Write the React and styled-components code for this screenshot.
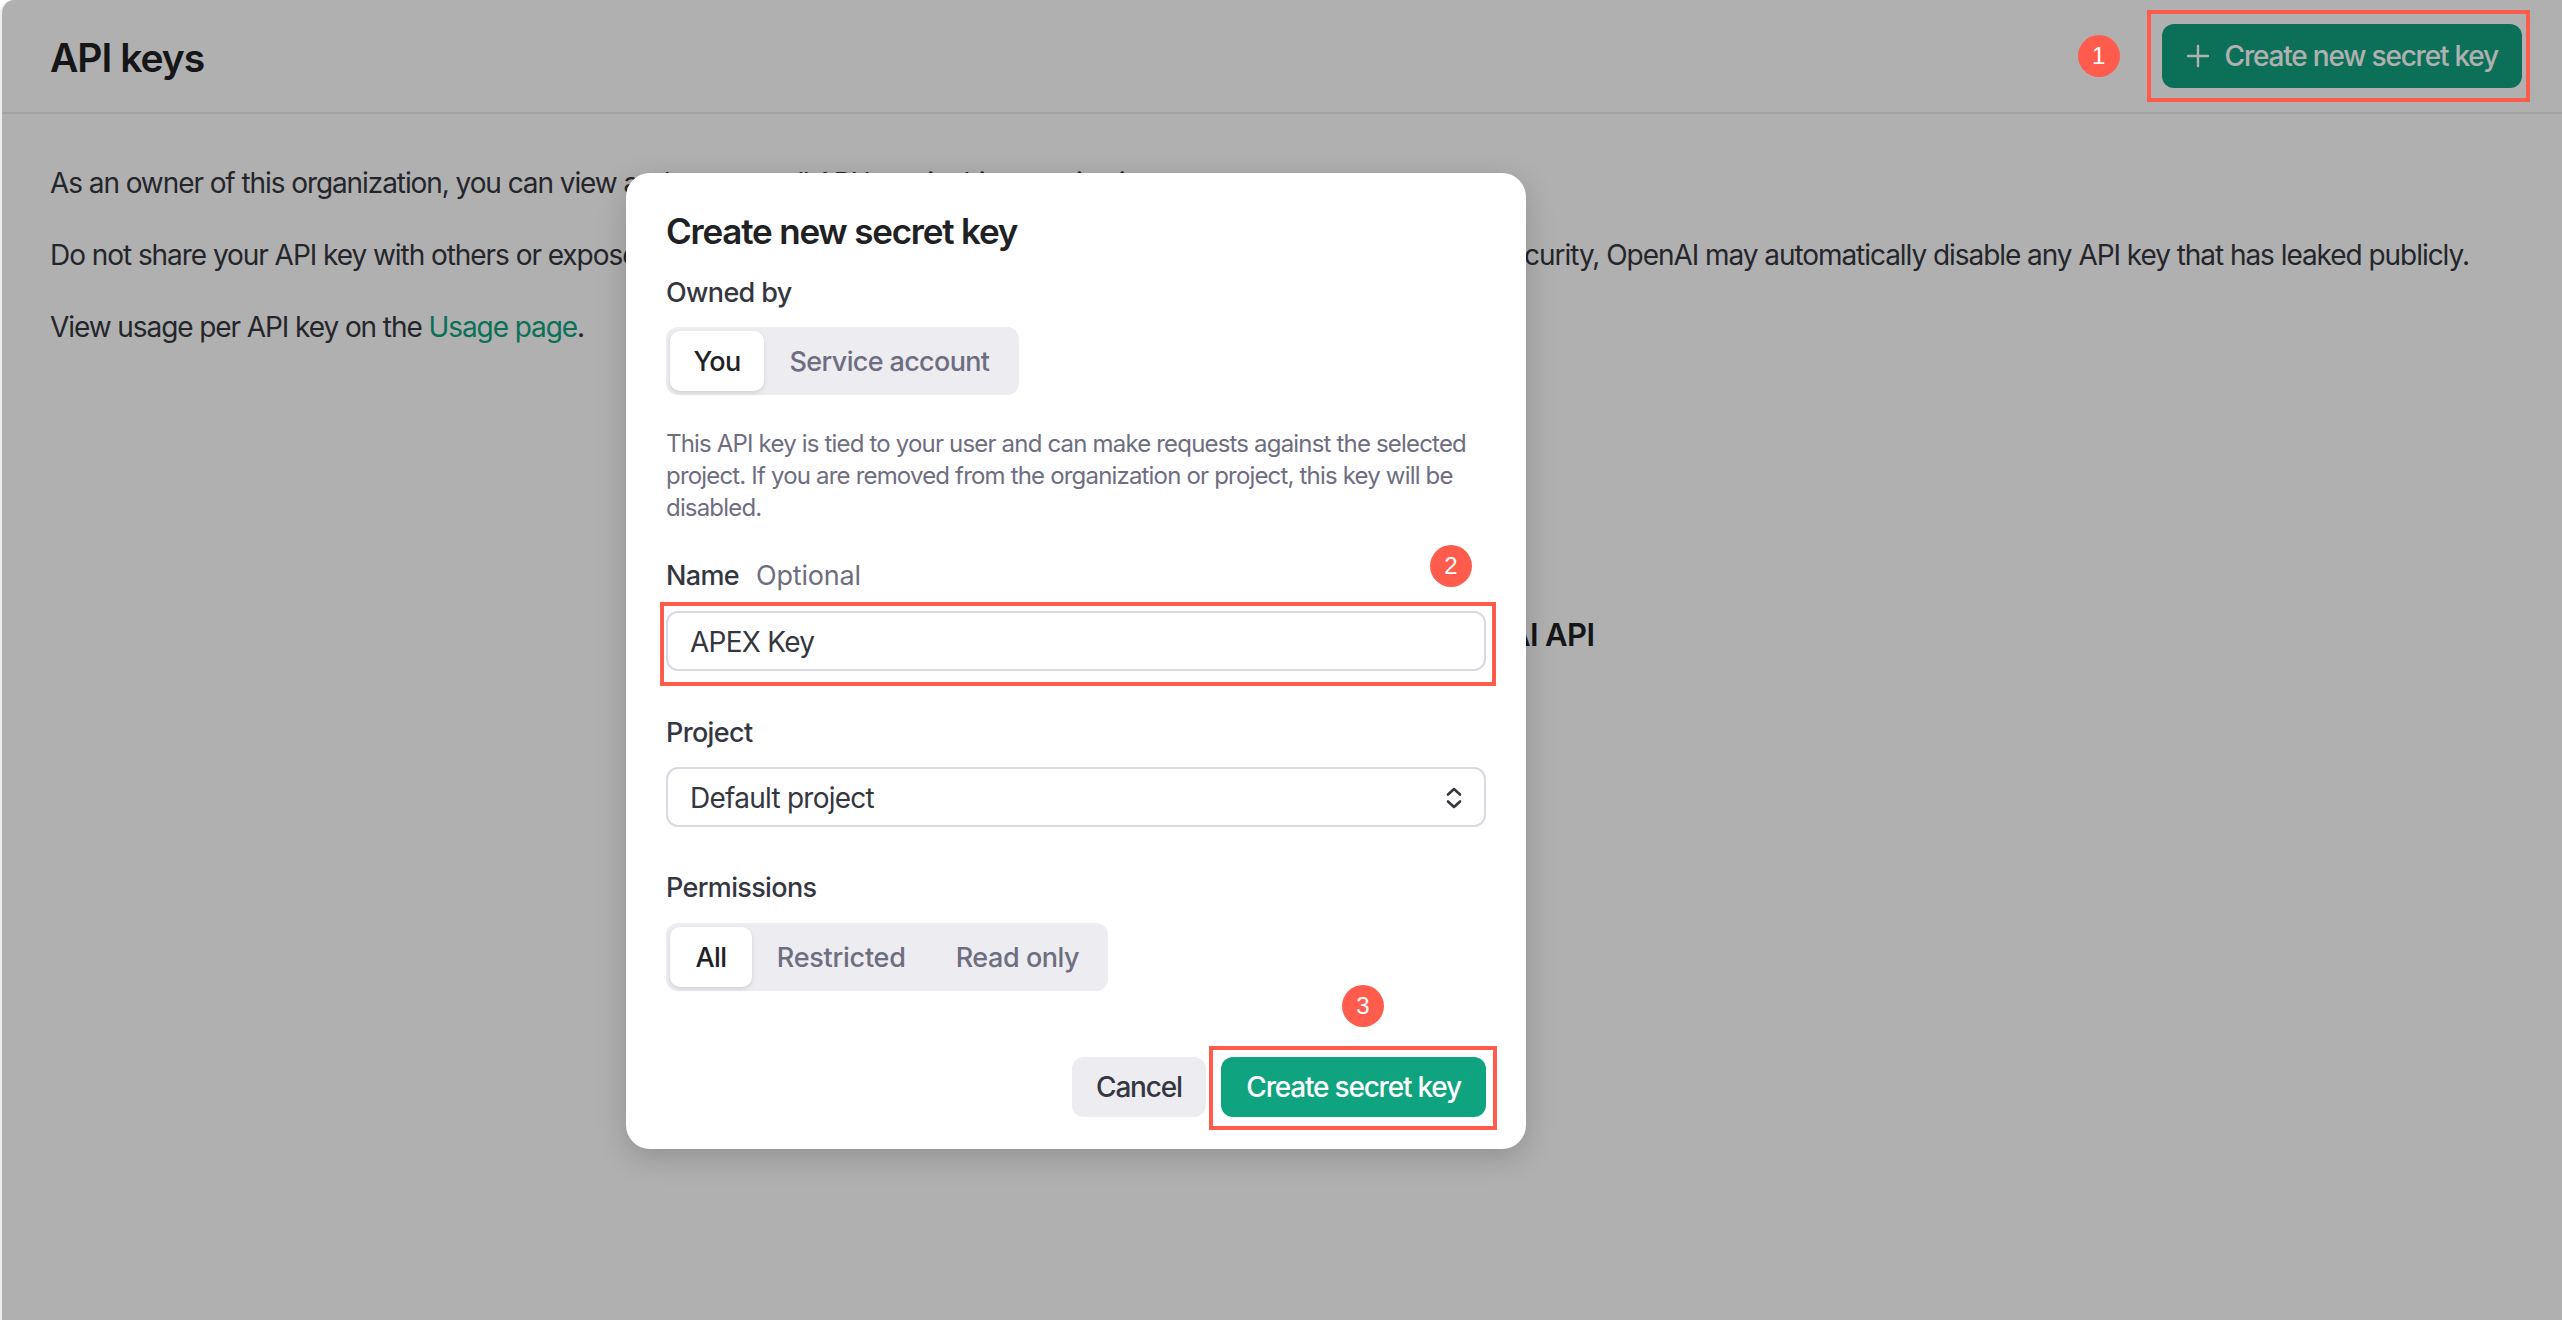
import React from "react";
import styled, { createGlobalStyle } from "styled-components";

const Global = createGlobalStyle`
  html, body { margin: 0; padding: 0; background: #fff; }
  body { font-family: "Inter", "Liberation Sans", sans-serif; color: #353740; }
  * { box-sizing: border-box; }
`;

const Page = styled.div`
  position: relative;
  width: 2562px;
  height: 1320px;
  overflow: hidden;
  background: #fff;
  border-left: 2px solid #ececf1;
  border-top-left-radius: 14px;
`;

const Header = styled.header`
  display: flex;
  align-items: center;
  height: 114px;
  padding: 0 40px 0 48px;
  border-bottom: 2px solid #ececf1;
`;

const PageTitle = styled.h1`
  flex: 1;
  margin: 2px 0 0;
  font-size: 39px;
  font-weight: 600;
  letter-spacing: -1px;
  color: #202123;
`;

const Badge = styled.span`
  display: flex;
  align-items: center;
  justify-content: center;
  width: 42px;
  height: 42px;
  border-radius: 50%;
  background: #ff5c4d;
  color: #fff;
  font-family: "Liberation Sans", sans-serif;
  font-size: 24px;
  position: relative;
  z-index: 3;
`;

const FloatingBadge = styled(Badge)`
  position: absolute;
  top: ${(p) => p.$top}px;
  right: ${(p) => p.$right}px;
`;

const Annotated = styled.div`
  position: relative;
  margin-left: ${(p) => p.$gap || 0}px;
`;

const RedBox = styled.span`
  position: absolute;
  z-index: 3;
  top: ${(p) => p.$t}px;
  right: ${(p) => p.$r}px;
  bottom: ${(p) => p.$b}px;
  left: ${(p) => p.$l}px;
  border: 4px solid #ff5c4d;
  pointer-events: none;
`;

const Button = styled.button`
  display: flex;
  align-items: center;
  gap: 16px;
  height: ${(p) => p.$h}px;
  padding: 0 ${(p) => p.$px}px;
  border: 0;
  border-radius: 12px;
  font: 500 28px "Inter", sans-serif;
  letter-spacing: -1.2px;
  background: ${(p) => p.$bg};
  color: ${(p) => p.$fg};
`;

const Content = styled.main`
  padding: 51px 48px 0;
`;

const Para = styled.p`
  margin: 0 0 36px;
  font-size: 28px;
  line-height: 36px;
  letter-spacing: ${(p) => p.$ls ?? -1.08}px;
  white-space: nowrap;
  color: #353740;
`;

const Link = styled.a`
  color: #10a37f;
`;

const EmptyHeading = styled.h2`
  margin: 270px 0 0;
  text-align: center;
  font-size: 31px;
  line-height: 40px;
  font-weight: 600;
  letter-spacing: -0.6px;
  color: #202123;
`;

const Overlay = styled.div`
  position: absolute;
  inset: 0;
  z-index: 1;
  display: flex;
  align-items: flex-start;
  padding: 173px 0 0 624px;
  background: rgba(0, 0, 0, 0.31);
`;

const Modal = styled.section`
  width: 900px;
  height: 976px;
  padding: 39px 40px 32px;
  background: #fff;
  border-radius: 24px;
  box-shadow: 0 8px 30px rgba(0, 0, 0, 0.18);
`;

const ModalTitle = styled.h2`
  margin: 0;
  font-size: 35px;
  line-height: 38px;
  font-weight: 600;
  letter-spacing: -1.2px;
  color: #202123;
`;

const Label = styled.div`
  display: flex;
  gap: 17px;
  margin-top: ${(p) => p.$mt}px;
  margin-bottom: ${(p) => p.$mb}px;
  font-size: 27px;
  line-height: 36px;
  font-weight: 500;
  letter-spacing: -0.65px;
  color: #353740;
`;

const Hint = styled.span`
  font-weight: 400;
  letter-spacing: -0.2px;
  color: #6e6e80;
`;

const Segmented = styled.div`
  display: inline-flex;
  align-items: center;
  height: 68px;
  padding: 4px;
  border-radius: 12px;
  background: #ececf1;
  vertical-align: top;
`;

const Segment = styled.span`
  display: flex;
  align-items: center;
  height: 60px;
  padding: 1px ${(p) => p.$px}px 0;
  border-radius: 10px;
  font-size: 27px;
  font-weight: 500;
  letter-spacing: ${(p) => p.$ls ?? -0.65}px;
  color: ${(p) => (p.$active ? "#202123" : "#6e6e80")};
  background: ${(p) => (p.$active ? "#fff" : "transparent")};
  box-shadow: ${(p) => (p.$active ? "0 2px 4px rgba(0,0,0,.12)" : "none")};
`;

const Description = styled.p`
  margin: 33px 0 0;
  width: 820px;
  font-size: 24px;
  line-height: 32px;
  letter-spacing: -0.82px;
  color: #6e6e80;
`;

const Field = styled.div`
  display: flex;
  align-items: center;
  justify-content: space-between;
  width: 820px;
  height: 60px;
  padding: 1px 22px 0;
  border: 2px solid #d9d9e3;
  border-radius: 12px;
  background: #fff;
  font-size: 28px;
  letter-spacing: -0.75px;
  color: #353740;
`;

const Footer = styled.div`
  position: relative;
  display: flex;
  justify-content: flex-end;
  gap: 15px;
  margin-top: 66px;
`;

const NameRow = styled.div`
  position: relative;
`;

const Plus = () => (
  <svg width="23" height="24" viewBox="0 0 23 24" fill="none" stroke="currentColor" strokeWidth="2.4" strokeLinecap="round">
    <path d="M12 2v20M2 12h20" />
  </svg>
);

const Chevrons = () => (
  <svg width="16" height="22" viewBox="0 0 16 22" fill="none" stroke="#353740" strokeWidth="2.6" strokeLinecap="round" strokeLinejoin="round">
    <path d="M2 7.5 8 2l6 5.5M2 14.5 8 20l6-5.5" />
  </svg>
);

export default function App() {
  return (
    <>
      <Global />
      <Page>
        <Header>
          <PageTitle>API keys</PageTitle>
          <Badge>1</Badge>
          <Annotated $gap={42}>
            <RedBox $t={-14} $r={-8} $b={-14} $l={-15} />
            <Button $h={64} $px={24} $bg="#10a37f" $fg="#fff">
              <Plus />
              Create new secret key
            </Button>
          </Annotated>
        </Header>
        <Content>
          <Para>As an owner of this organization, you can view and manage all API keys in this organization.</Para>
          <Para $ls={-1.05}>
            Do not share your API key with others or expose it in the browser or other client-side code. To safeguard your account security, OpenAI may automatically disable any API key that has leaked publicly.
          </Para>
          <Para>
            View usage per API key on the <Link>Usage page</Link>.
          </Para>
          <EmptyHeading>Create an API key to access the OpenAI API</EmptyHeading>
        </Content>
        <Overlay>
          <Modal>
            <ModalTitle>Create new secret key</ModalTitle>
            <Label $mt={25} $mb={16}>Owned by</Label>
            <Segmented>
              <Segment $active $px={23.5}>You</Segment>
              <Segment $px={25.5}>Service account</Segment>
            </Segmented>
            <Description>
              This API key is tied to your user and can make requests against the selected project. If you are removed from the organization or project, this key will be disabled.
            </Description>
            <NameRow>
              <FloatingBadge $top={-13} $right={14}>2</FloatingBadge>
              <Label $mt={34} $mb={17}>
                Name <Hint>Optional</Hint>
              </Label>
              <Annotated>
                <RedBox $t={-9} $r={-10} $b={-15} $l={-6} />
                <Field>APEX Key</Field>
              </Annotated>
            </NameRow>
            <Label $mt={44} $mb={16}>Project</Label>
            <Field>
              Default project
              <Chevrons />
            </Field>
            <Label $mt={43} $mb={17}>Permissions</Label>
            <Segmented>
              <Segment $active $px={25.5}>All</Segment>
              <Segment $px={25} $ls={-0.25}>Restricted</Segment>
              <Segment $px={25} $ls={-0.45}>Read only</Segment>
            </Segmented>
            <Footer>
              <FloatingBadge $top={-72} $right={102}>3</FloatingBadge>
              <Button $h={60} $px={24.5} $bg="#ececf1" $fg="#353740">Cancel</Button>
              <Annotated>
                <RedBox $t={-11} $r={-11} $b={-13} $l={-12} />
                <Button $h={60} $px={25} $bg="#10a37f" $fg="#fff">Create secret key</Button>
              </Annotated>
            </Footer>
          </Modal>
        </Overlay>
      </Page>
    </>
  );
}
